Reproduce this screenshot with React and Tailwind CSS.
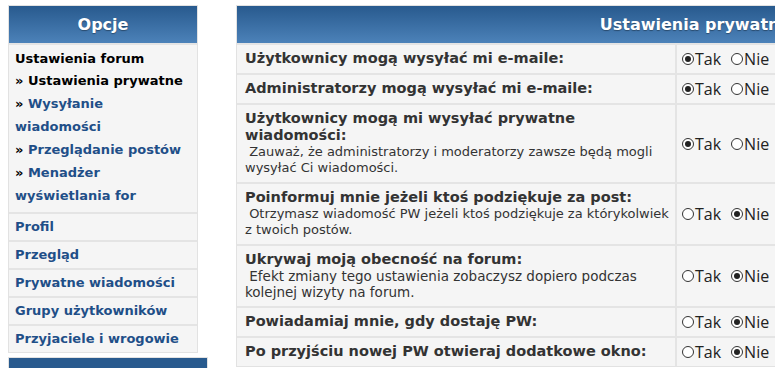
import React from "react";

const sideLinks = [
  { text: "Wysyłanie", text2: "wiadomości" },
  { text: "Przeglądanie postów" },
  { text: "Menadżer", text2: "wyświetlania for" },
];

const sideRows = ["Profil", "Przegląd", "Prywatne wiadomości", "Grupy użytkowników", "Przyjaciele i wrogowie"];

const settings = [
  { title: "Użytkownicy mogą wysyłać mi e-maile:", yes: true },
  { title: "Administratorzy mogą wysyłać mi e-maile:", yes: true },
  {
    title: ["Użytkownicy mogą mi wysyłać prywatne", "wiadomości:"],
    desc: [" Zauważ, że administratorzy i moderatorzy zawsze będą mogli", "wysyłać Ci wiadomości."],
    yes: true,
  },
  {
    title: "Poinformuj mnie jeżeli ktoś podziękuje za post:",
    desc: [" Otrzymasz wiadomość PW jeżeli ktoś podziękuje za którykolwiek", "z twoich postów."],
    yes: false,
  },
  {
    title: "Ukrywaj moją obecność na forum:",
    desc: [" Efekt zmiany tego ustawienia zobaczysz dopiero podczas", "kolejnej wizyty na forum."],
    wide: true,
    yes: false,
  },
  { title: "Powiadamiaj mnie, gdy dostaję PW:", yes: false },
  { title: "Po przyjściu nowej PW otwieraj dodatkowe okno:", yes: false },
];

function Radio({ checked, label }) {
  return (
    <span className="flex items-center">
      <span className="w-[12px] h-[12px] rounded-full border border-[#333] flex items-center justify-center bg-white">
        {checked && <span className="w-[6px] h-[6px] rounded-full bg-[#222]" />}
      </span>
      <span className="ml-[1px]">{label}</span>
    </span>
  );
}

function Header({ children }) {
  return (
    <div className="h-[37px] bg-gradient-to-b from-[#285a8e] to-[#4c82b9] flex items-center justify-center text-white font-bold text-[16px] [text-shadow:0_1px_1px_rgba(0,0,0,0.35)]">
      {children}
    </div>
  );
}

export default function App() {
  return (
    <div className="w-[775px] h-[368px] overflow-hidden bg-white font-['DejaVu_Sans',Verdana,sans-serif]">
      <div className="flex items-start pt-[5px] pl-[8px]">
        <div className="w-[200px] shrink-0">
          <div className="w-[190px] border border-[#e2e2e2] bg-[#f5f5f5]">
            <Header>Opcje</Header>
            <div className="border-t-2 border-[#e4e4e4] pl-[6px] pt-[4px] pb-[5px] text-[13px] font-bold">
              <div className="leading-[20px] text-black">Ustawienia forum</div>
              <div className="leading-[23px] text-black whitespace-nowrap">» Ustawienia prywatne</div>
              {sideLinks.map((l) => (
                <React.Fragment key={l.text}>
                  <div className="leading-[23px] text-[#1f4f88] whitespace-nowrap">
                    <span className="text-black">»</span> {l.text}
                  </div>
                  {l.text2 && <div className="leading-[23px] text-[#1f4f88] whitespace-nowrap">{l.text2}</div>}
                </React.Fragment>
              ))}
            </div>
            {sideRows.map((r) => (
              <div
                key={r}
                className="border-t-2 border-[#e4e4e4] h-[28px] pl-[6px] flex items-center text-[13px] font-bold text-[#1f4f88] whitespace-nowrap"
              >
                {r}
              </div>
            ))}
          </div>
          <div className="mt-[4px] w-[200px] border border-[#e2e2e2] h-[20px] bg-[#285a8e]" />
        </div>

        <div className="ml-[28px] w-[918px] shrink-0 border border-[#e2e2e2] bg-[#f5f5f5]">
          <Header>Ustawienia prywatne</Header>
          {settings.map((s, i) => (
            <div key={i} className="flex border-t-2 border-[#e4e4e4] text-[#333]">
              <div className="w-[438px] shrink-0 pl-[8px] pr-[4px] pt-[5px] pb-[6px]">
                <div className="text-[14.5px] font-bold leading-[17px] whitespace-nowrap">
                  {Array.isArray(s.title) ? (
                    <>
                      {s.title[0]}
                      <br />
                      {s.title[1]}
                    </>
                  ) : (
                    s.title
                  )}
                </div>
                {s.desc && (
                  <div className={`${s.wide ? "text-[13.5px]" : "text-[13px]"} leading-[16px] whitespace-pre`}>
                    {s.desc[0]}
                    <br />
                    {s.desc[1]}
                  </div>
                )}
              </div>
              <div className="border-l-2 border-[#e4e4e4] flex-1 flex items-center gap-[10px] pl-[5px] text-[16px] text-[#222] font-['Open_Sans',sans-serif]">
                <Radio checked={s.yes} label="Tak" />
                <Radio checked={!s.yes} label="Nie" />
              </div>
            </div>
          ))}
        </div>
      </div>
    </div>
  );
}
